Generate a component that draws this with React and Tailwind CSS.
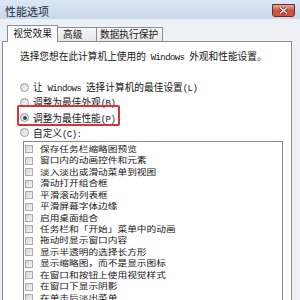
const L = ({ children }) => (
  <span className="font-['Liberation_Mono',monospace] text-[9px] tracking-[-0.6px] whitespace-pre">{children}</span>
);

const EFFECTS = [
  '保存任务栏缩略图预览',
  '窗口内的动画控件和元素',
  '淡入淡出或滑动菜单到视图',
  '滑动打开组合框',
  '平滑滚动列表框',
  '平滑屏幕字体边缘',
  '启用桌面组合',
  '任务栏和「开始」菜单中的动画',
  '拖动时显示窗口内容',
  '显示半透明的选择长方形',
  '显示缩略图，而不是显示图标',
  '在窗口和按钮上使用视觉样式',
  '在窗口下显示阴影',
  '在单击后淡出菜单',
];

function Radio({ checked, children }) {
  return (
    <div className="flex h-[15.3px] items-center gap-[4px]">
      <span className="flex h-[9px] w-[9px] items-center justify-center rounded-full border border-[#9a9a9a] bg-gradient-to-br from-[#d6d6d6] to-[#fafafa]">
        {checked && <span className="h-[4px] w-[4px] rounded-full bg-[#2b4d7e]" />}
      </span>
      <span className="block h-[12px] leading-[12px] whitespace-nowrap">{children}</span>
    </div>
  );
}

export default function App() {
  return (
    <div className="relative flex h-[300px] w-[300px] flex-col overflow-hidden bg-[#c9d9ec] text-[9.7px] text-[#151515] font-['Noto_Sans_CJK_SC',sans-serif]">
      {/* title bar */}
      <div className="flex h-[19px] shrink-0 items-center justify-between bg-gradient-to-b from-[#dbe7f4] to-[#c8d8eb] pl-[5px] pr-[5px]">
        <span className="mt-[3px] text-[11px] leading-none text-[#1e2d40]">性能选项</span>
        <div className="mt-[4px] flex h-[13px] w-[23px] self-start items-center justify-center rounded-b-[3px] border border-[#6b2c22] bg-gradient-to-b from-[#e9a899] via-[#c95444] to-[#d8503a]">
          <svg width="9" height="7" viewBox="0 0 9 7">
            <path d="M1 0.5 L8 6.5 M8 0.5 L1 6.5" stroke="#5a2018" strokeWidth="2.6" />
            <path d="M1 0.5 L8 6.5 M8 0.5 L1 6.5" stroke="#ffffff" strokeWidth="1.4" />
          </svg>
        </div>
      </div>

      {/* client area */}
      <div className="flex flex-1 flex-col bg-[#edf1f6] pl-[2px]">
        {/* tabs */}
        <div className="flex h-[22px] shrink-0 items-end pl-[5px]">
          <div className="relative z-10 -mb-px flex h-[17px] w-[51px] items-center justify-center border-x border-t border-[#898c95] bg-white leading-none">
            视觉效果
          </div>
          <div className="flex h-[14px] w-[39px] items-center border-r border-t border-[#898c95] bg-gradient-to-b from-[#f7f7f7] to-[#e6e6e6] pl-[5px] leading-none">
            高级
          </div>
          <div className="flex h-[14px] w-[66px] items-center border-r border-t border-[#898c95] bg-gradient-to-b from-[#f7f7f7] to-[#e6e6e6] pl-[3px] leading-none">
            数据执行保护
          </div>
        </div>

        {/* panel */}
        <div className="flex w-[290px] flex-1 flex-col border border-[#898c95] bg-white pl-[17px] pt-[8px]">
          <div className="h-[12px] whitespace-nowrap leading-[12px]">
            选择您想在此计算机上使用的<L> Windows </L>外观和性能设置。
          </div>

          <div className="relative mt-[17.4px]">
            <Radio>
              让<L> Windows </L>选择计算机的最佳设置<L>(L)</L>
            </Radio>
            <Radio>
              调整为最佳外观<L>(B)</L>
            </Radio>
            <Radio checked>
              调整为最佳性能<L>(P)</L>
            </Radio>
            <Radio>
              自定义<L>(C):</L>
            </Radio>
            <div className="absolute left-[-3px] top-[25.6px] h-[21px] w-[103px] rounded-[2px] border-2 border-[#d8323b]" />
          </div>

          <div className="ml-[3px] flex w-[260px] flex-1 flex-col overflow-hidden border border-[#828790] pl-[1px] pt-[2px]">
            {EFFECTS.map((label) => (
              <div key={label} className="flex h-[11.46px] shrink-0 items-center gap-[7px]">
                <span className="h-[8px] w-[8px] shrink-0 border border-[#ababab] bg-gradient-to-br from-[#d4d4d4] to-[#f6f6f6]" />
                <span className="block h-[11px] scale-y-[0.8] leading-[11px] whitespace-nowrap">{label}</span>
              </div>
            ))}
          </div>
        </div>
      </div>
    </div>
  );
}
